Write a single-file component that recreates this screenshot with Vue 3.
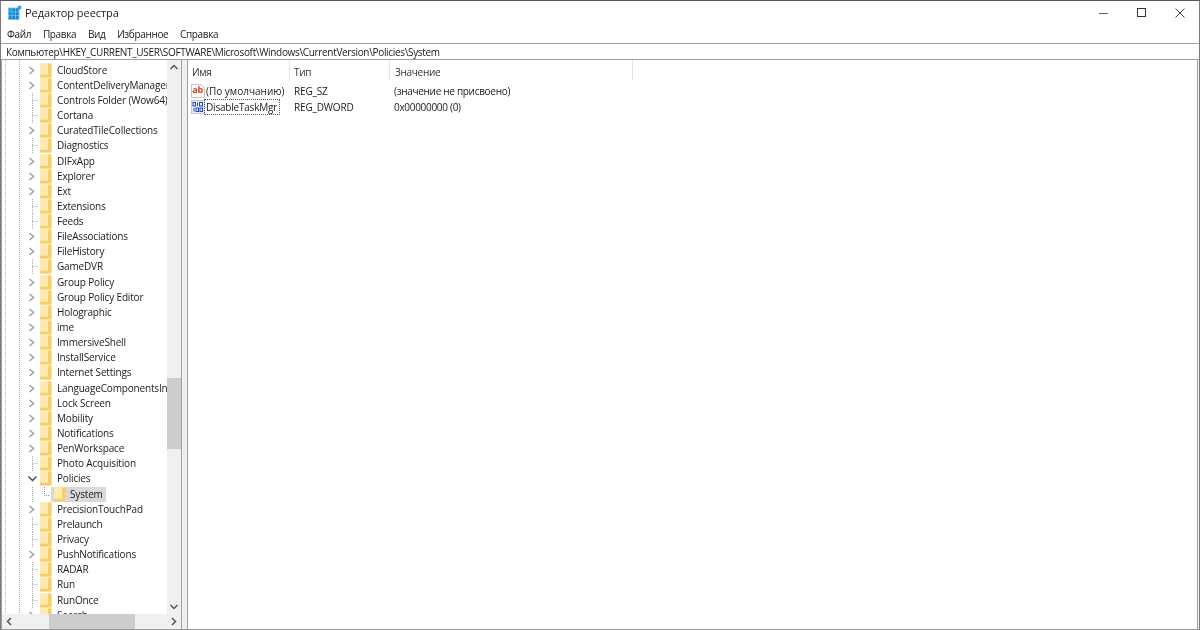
<script setup>
const menu = ['Файл', 'Правка', 'Вид', 'Избранное', 'Справка']
const tree = [
  ['CloudStore', 'c'], ['ContentDeliveryManager', 'c'], ['Controls Folder (Wow64)', 'l'], ['Cortana', 'l'],
  ['CuratedTileCollections', 'c'], ['Diagnostics', 'l'], ['DIFxApp', 'c'], ['Explorer', 'c'], ['Ext', 'c'],
  ['Extensions', 'l'], ['Feeds', 'l'], ['FileAssociations', 'c'], ['FileHistory', 'c'], ['GameDVR', 'l'],
  ['Group Policy', 'c'], ['Group Policy Editor', 'c'], ['Holographic', 'c'], ['ime', 'c'], ['ImmersiveShell', 'c'],
  ['InstallService', 'c'], ['Internet Settings', 'c'], ['LanguageComponentsInstaller', 'c'], ['Lock Screen', 'c'],
  ['Mobility', 'c'], ['Notifications', 'c'], ['PenWorkspace', 'c'], ['Photo Acquisition', 'l'], ['Policies', 'o'],
  ['System', 's'], ['PrecisionTouchPad', 'c'], ['Prelaunch', 'l'], ['Privacy', 'l'], ['PushNotifications', 'c'],
  ['RADAR', 'l'], ['Run', 'l'], ['RunOnce', 'l'], ['Search', 'c']
]
const cols = [
  { name: 'Имя', w: 102 }, { name: 'Тип', w: 100 }, { name: 'Значение', w: 243 }
]
</script>

<template>
  <div class="win">
    <header class="title">
      <svg class="logo" width="14" height="15" viewBox="0 0 14 15">
        <rect x="0.5" y="3" width="10.5" height="11.5" fill="#1487d2" stroke="#6fc6ee" stroke-width="0.8" />
        <path d="M4 3V14.5M7.5 3V14.5M0.5 6.8H11M0.5 10.6H11" stroke="#7fcdf0" stroke-width="0.7" />
        <rect x="0.9" y="3.4" width="3" height="3.2" fill="#2ea6e2" />
        <circle cx="11.5" cy="2.5" r="2.1" fill="#3aa3d8" />
      </svg>
      <span class="title-text">Редактор реестра</span>
      <div class="controls">
        <svg width="10" height="10" viewBox="0 0 10 10"><path d="M0 5.5H9" stroke="#666" stroke-width="1" /></svg>
        <svg width="10" height="10" viewBox="0 0 10 10"><rect x="0.5" y="0.5" width="8" height="8" fill="none" stroke="#333" /></svg>
        <svg width="10" height="10" viewBox="0 0 10 10"><path d="M0.5 0.5L9.5 9.5M9.5 0.5L0.5 9.5" stroke="#444" /></svg>
      </div>
    </header>
    <nav class="menu"><span v-for="m in menu" :key="m">{{ m }}</span></nav>
    <div class="address">Компьютер\HKEY_CURRENT_USER\SOFTWARE\Microsoft\Windows\CurrentVersion\Policies\System</div>
    <main class="panes">
      <aside class="tree-pane">
        <div class="tree-body">
          <div class="tree-clip">
            <div v-for="t in tree" :key="t[0]" class="row">
              <svg v-if="t[1] === 'c'" class="twist" width="12" height="15" viewBox="0 0 12 15"><path d="M2.5 4L6.5 7.5L2.5 11" fill="none" stroke="#a0a0a0" stroke-width="1.5" /></svg>
              <svg v-else-if="t[1] === 'o'" class="twist" width="12" height="15" viewBox="0 0 12 15"><path d="M1.5 5.5L5.5 9.5L9.5 5.5" fill="none" stroke="#444" stroke-width="1.4" /></svg>
              <svg v-else-if="t[1] === 'l'" class="twist" width="12" height="15" viewBox="0 0 12 15"><path d="M5.5 0V15M5.5 7.5H11" fill="none" stroke="#aaa" stroke-dasharray="1 1" /></svg>
              <svg v-else class="twist deep" width="24" height="15" viewBox="0 0 24 15"><path d="M5.5 0V15" fill="none" stroke="#aaa" stroke-dasharray="1 1" /><path d="M17.5 0V8.5H23" fill="none" stroke="#888" stroke-dasharray="1 1" /></svg>
              <span class="node" :class="{ sel: t[1] === 's' }">
                <svg class="folder" width="12" height="15" viewBox="0 0 12 15">
                  <path d="M0 0.5H11.5V14.5H0Z" fill="#ffe49b" />
                  <path d="M8 0.5H11.5V14.5H0V11.5H8Z" fill="#f5cf6b" />
                  <path d="M0 0.5H8V11.5H0Z" fill="#ffe9ad" />
                </svg>
                <span class="label">{{ t[0] }}</span>
              </span>
            </div>
          </div>
          <div class="vscroll">
            <svg width="14" height="14" viewBox="0 0 14 14"><path d="M3.5 9L7 5.5L10.5 9" fill="none" stroke="#555" stroke-width="1.5" /></svg>
            <div class="vtrack"><div class="vthumb"></div></div>
            <svg width="14" height="14" viewBox="0 0 14 14"><path d="M3.5 5L7 8.5L10.5 5" fill="none" stroke="#555" stroke-width="1.5" /></svg>
          </div>
        </div>
        <div class="hscroll">
          <svg width="14" height="15" viewBox="0 0 14 15"><path d="M9 4L5.5 7.5L9 11" fill="none" stroke="#555" stroke-width="1.5" /></svg>
          <div class="htrack"><div class="hthumb"></div></div>
          <svg width="14" height="15" viewBox="0 0 14 15"><path d="M5 4L8.5 7.5L5 11" fill="none" stroke="#555" stroke-width="1.5" /></svg>
        </div>
      </aside>
      <section class="list">
        <div class="list-head">
          <span v-for="c in cols" :key="c.name" class="col" :style="{ width: c.w + 'px' }">{{ c.name }}</span>
        </div>
        <div class="list-row">
          <div class="c1">
            <svg class="val" width="14" height="14" viewBox="0 0 14 14">
              <path d="M0.5 0.5H10L13.5 4V13.5H0.5Z" fill="#fbfbfb" stroke="#c4c4c4" />
              <text x="6.6" y="9" text-anchor="middle" class="ab">ab</text>
            </svg>
            <span class="nm cyr">(По умолчанию)</span>
          </div>
          <div class="c2">REG_SZ</div>
          <div class="c3">(значение не присвоено)</div>
        </div>
        <div class="list-row">
          <div class="c1">
            <svg class="val" width="14" height="14" viewBox="0 0 14 14">
              <rect x="0.5" y="0.5" width="13" height="13" fill="#e9f0fb" stroke="#b9c6dd" />
              <g fill="none" stroke="#2347c4" stroke-width="1">
                <rect x="2" y="2.5" width="2.5" height="3.5" /><path d="M6.5 2.5V6" /><rect x="8.5" y="2.5" width="3" height="3.5" />
                <path d="M3 8V11.5" /><rect x="5" y="8" width="2.5" height="3.5" /><rect x="9" y="8" width="2.5" height="3.5" />
              </g>
            </svg>
            <span class="nm focus">DisableTaskMgr</span>
          </div>
          <div class="c2">REG_DWORD</div>
          <div class="c3">0x00000000 (0)</div>
        </div>
      </section>
    </main>
  </div>
</template>

<style>
html, body { margin: 0; background: #fff; }
</style>

<style scoped>
.win {
  width: 1200px; height: 630px; box-sizing: border-box; overflow: hidden;
  display: flex; flex-direction: column; background: #fff; color: #1a1a1a;
  font-family: "Open Sans", "Noto Sans", sans-serif; font-size: 10px; letter-spacing: -0.17px;
  border: 1px solid #7b7b7b; border-top-color: #555; border-bottom-color: #999;
  filter: blur(0.35px);
}
.title { height: 24px; box-sizing: border-box; display: flex; align-items: center; padding: 0 0 1px 7px; flex: none; }
.logo { margin-right: 3px; }
.title-text { font-size: 11px; color: #222; letter-spacing: -0.05px; }
.controls { margin-left: auto; display: flex; gap: 28px; padding-right: 14px; align-items: center; }
.menu { height: 18px; display: flex; align-items: center; gap: 11.7px; padding: 0 0 1px 6px; box-sizing: border-box; flex: none; letter-spacing: -0.35px; }
.address {
  height: 17px; line-height: 16px; flex: none; box-sizing: border-box; padding-left: 5px; white-space: nowrap;
  border-top: 1px solid #a0a0a0; border-bottom: 1px solid #a0a0a0; letter-spacing: -0.33px;
}
.panes { flex: 1; min-height: 0; display: flex; background: #f0f0f0; padding: 0 1px 0 0; gap: 5px; }
.tree-pane { width: 181px; flex: none; display: flex; flex-direction: column; background: #fff; border-left: 1px solid #a0a0a0; border-right: 1px solid #a0a0a0; box-sizing: border-box; }
.tree-body { flex: 1; min-height: 0; display: flex; }
.tree-clip {
  flex: 1; min-width: 0; overflow: hidden; padding: 2.6px 0 0 18px;
  background-image: repeating-linear-gradient(#bbb 0 1px, transparent 1px 2px), repeating-linear-gradient(#aaa 0 1px, transparent 1px 2px);
  background-size: 1px 100%, 1px 100%; background-repeat: no-repeat; background-position: 3px 0, 17px 0;
}
.row { height: 15.15px; display: flex; align-items: center; white-space: nowrap; }
.twist { flex: none; margin-left: 7px; margin-right: 1px; }
.twist.deep { margin-right: 0; }
.node { display: flex; align-items: center; height: 15px; }
.node.sel { background: #d9d9d9; padding-right: 3px; }
.folder { flex: none; margin-right: 5px; }
.node.sel .folder { margin-left: 3px; margin-right: 4px; }
.label { line-height: 15px; }
.vscroll { width: 14px; flex: none; background: #f0f0f0; display: flex; flex-direction: column; align-items: center; }
.vtrack { flex: 1; width: 100%; padding-top: 304px; box-sizing: border-box; }
.vthumb { height: 71px; background: #cdcdcd; }
.hscroll { height: 15px; flex: none; background: #f0f0f0; display: flex; }
.htrack { flex: 1; padding-left: 33px; }
.hthumb { width: 86px; height: 100%; background: #cdcdcd; }
.list { flex: 1; min-width: 0; background: #fff; border-left: 1px solid #a0a0a0; border-right: 1px solid #a0a0a0; }
.list-head { height: 23px; display: flex; letter-spacing: -0.3px; }
.col { box-sizing: border-box; padding-left: 4px; height: 20px; line-height: 25px; border-right: 1px solid #e5e5e5; color: #333; }
.col:last-child { padding-left: 5px; }
.list-row { display: flex; height: 16px; align-items: center; }
.c1 { width: 102px; display: flex; align-items: center; padding-left: 3px; box-sizing: border-box; }
.c2 { width: 100px; padding-left: 4px; box-sizing: border-box; }
.c3 { padding-left: 4px; letter-spacing: -0.3px; }
.val { flex: none; }
.ab { font-size: 9px; font-weight: 700; fill: #d8401f; font-family: "Open Sans", sans-serif; }
.nm { padding: 0 1px; white-space: nowrap; }
.cyr { letter-spacing: 0; }
.focus { outline: 1px dotted #555; outline-offset: -1px; padding: 0 3px 0 2px; margin-left: -1px; line-height: 16px; letter-spacing: -0.2px; }
</style>
